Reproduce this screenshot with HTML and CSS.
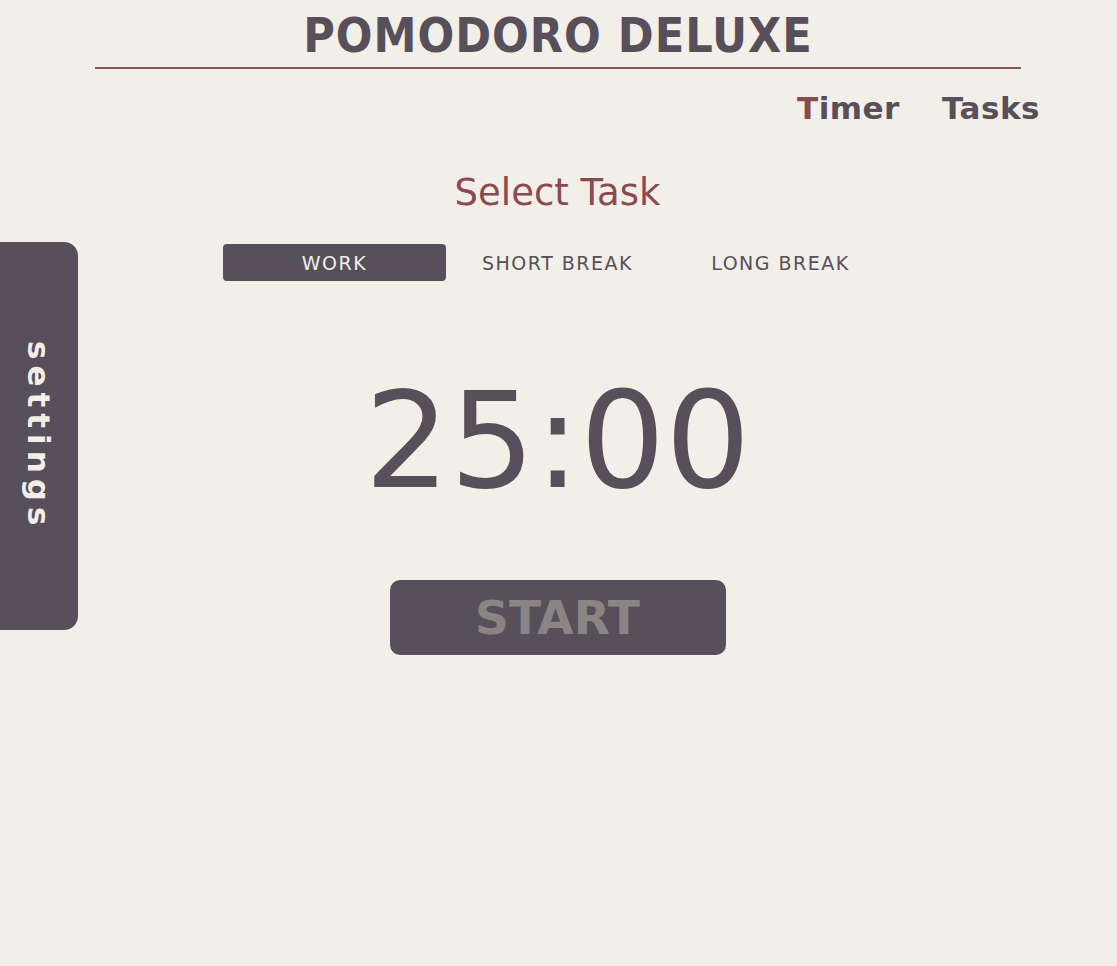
FILE: index.html
```html
<!DOCTYPE html>
<html lang="en">
<head>
<meta charset="utf-8">
<title>Pomodoro Deluxe</title>
<link rel="stylesheet" href="styles.css">
</head>
<body>
<header class="header">
  <h1 class="title">POMODORO DELUXE</h1>
  <nav class="nav">
    <a class="nav-link"><span class="accent">T</span>imer</a>
    <a class="nav-link">Tasks</a>
  </nav>
</header>
<button class="settings-tab"><span class="settings-text">settings</span></button>
<main class="main">
  <h2 class="select-title">Select Task</h2>
  <div class="tabs">
    <button class="tab tab-active">WORK</button>
    <button class="tab">SHORT BREAK</button>
    <button class="tab">LONG BREAK</button>
  </div>
  <div class="time">25:00</div>
  <button class="start">START</button>
</main>
</body>
</html>
```
FILE: styles.css
```css
* { box-sizing: border-box; }
html, body {
  margin: 0;
  background: #f2eee8;
  font-family: "DejaVu Sans", "Liberation Sans", sans-serif;
  color: #574f5a;
}
.header {
  padding-top: 11px;
}
.title {
  margin: 0 96px 0 95px;
  padding-bottom: 8px;
  border-bottom: 2px solid #8e545a;
  text-align: center;
  font-family: "DejaVu Sans Condensed", "DejaVu Sans", sans-serif;
  font-size: 48px;
  line-height: 48px;
  letter-spacing: 1px;
  font-weight: bold;
  color: #574f5a;
}
.nav {
  display: flex;
  justify-content: flex-end;
  gap: 42px;
  padding-right: 77px;
  margin-top: 23px;
}
.nav-link {
  font-size: 31px;
  line-height: 32px;
  font-weight: bold;
  letter-spacing: 0.5px;
  color: #574f5a;
}
.accent { color: #8a4a50; }
.settings-tab {
  position: absolute;
  left: 0;
  top: 242px;
  width: 78px;
  height: 388px;
  border: none;
  border-radius: 0 14px 14px 0;
  background: #574f5a;
  display: flex;
  align-items: center;
  justify-content: center;
  padding: 0;
}
.settings-text {
  writing-mode: vertical-rl;
  font-family: "DejaVu Sans", sans-serif;
  font-weight: bold;
  font-size: 31px;
  letter-spacing: 6px;
  color: #f2eee8;
}
.main {
  display: flex;
  flex-direction: column;
  align-items: center;
  padding-right: 2px;
}
.select-title {
  margin: 50px 0 0 0;
  font-size: 37px;
  line-height: 38px;
  font-weight: normal;
  color: #8a4a50;
}
.tabs {
  display: grid;
  grid-template-columns: repeat(3, 223px);
  margin-top: 32px;
}
.tab {
  height: 37px;
  border: none;
  border-radius: 4px;
  background: transparent;
  font-family: "DejaVu Sans", sans-serif;
  font-size: 19px;
  letter-spacing: 1.5px;
  color: #574f5a;
  padding: 0;
}
.tab-active {
  background: #574f5a;
  color: #f2eee8;
}
.time {
  margin-top: 90px;
  font-size: 134px;
  line-height: 141px;
  color: #574f5a;
}
.start {
  margin-top: 68px;
  width: 336px;
  height: 75px;
  border: none;
  border-radius: 10px;
  background: #574f5a;
  color: #8a8585;
  font-family: "DejaVu Sans", sans-serif;
  font-weight: bold;
  font-size: 47px;
  padding: 0;
}
```
